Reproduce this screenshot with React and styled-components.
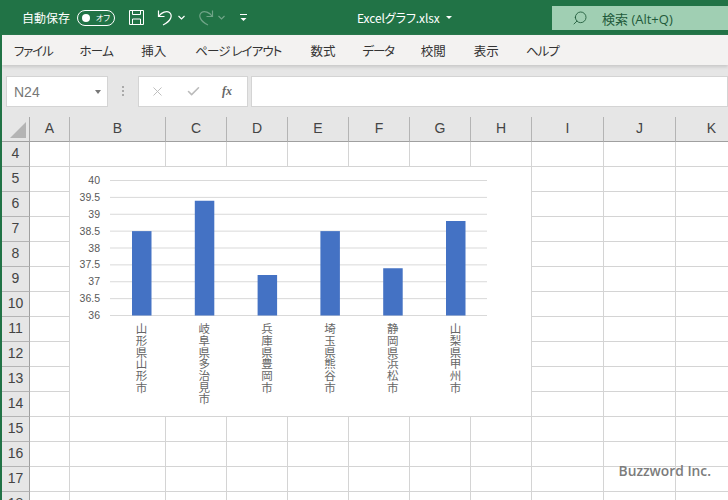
import styled, { createGlobalStyle } from "styled-components";
import { Search, X, Check } from "lucide-react";

const GlobalStyle = createGlobalStyle`
  html, body { margin: 0; padding: 0; background: #fff; }
  body { font-family: "Noto Sans CJK JP", "Liberation Sans", sans-serif; overflow: hidden; }
`;

const Window = styled.div`
  width: 728px;
  height: 500px;
  overflow: hidden;
  position: relative;
  border-left: 2px solid #217346;
  box-sizing: border-box;
`;
const TitleBar = styled.div`
  height: 35px;
  margin-left: -2px;
  background: #217346;
  color: #fff;
  display: flex;
  align-items: center;
  font-size: 12px;
`;
const AutoSave = styled.span`
  margin-left: 22px;
  font-size: 12px;
  white-space: nowrap;
`;
const Toggle = styled.span`
  width: 38px;
  height: 16px;
  margin-left: 7px;
  border: 1px solid #fff;
  border-radius: 8px;
  display: flex;
  align-items: center;
  justify-content: space-between;
  padding: 0 4px;
  box-sizing: border-box;
  font-size: 8px;
  font-feature-settings: "palt";
  &::before {
    content: "";
    width: 8px;
    height: 8px;
    border-radius: 50%;
    background: #fff;
  }
`;
const IconSlot = styled.span`
  display: flex;
  align-items: center;
  margin-left: ${(props) => props.$gap}px;
  opacity: ${(props) => (props.$dim ? 0.35 : 1)};
`;
const FileName = styled.span`
  margin-left: 110px;
  font-size: 12px;
  font-feature-settings: "palt";
  letter-spacing: -0.1px;
  white-space: nowrap;
`;
const FileArrow = styled.span`
  margin-left: 6px;
  border: 3px solid transparent;
  border-top: 3px solid #fff;
  border-bottom: 0;
`;
const SearchBox = styled.div`
  width: 176px;
  height: 24px;
  margin: 1px 0 0 auto;
  background: #a0cfb3;
  color: #1f5a3a;
  display: flex;
  align-items: center;
  font-family: "Open Sans", "Noto Sans CJK JP", sans-serif;
  font-size: 13px;
  padding-left: 20px;
  box-sizing: border-box;
  gap: 14px;
  white-space: nowrap;
`;
const SearchIcon = styled(Search)`
  transform: scaleX(-1);
`;
const Ribbon = styled.div`
  height: 30px;
  background: #f3f2f1;
  display: flex;
  align-items: center;
  font-size: 12.5px;
  font-feature-settings: "palt";
  color: #333;
  box-shadow: 0 2px 3px #c8c8c8;
  position: relative;
`;
const Tab = styled.span`
  margin-left: ${(props) => props.$gap}px;
  letter-spacing: ${(props) => props.$squeeze}px;
  white-space: nowrap;
`;
const FormulaBar = styled.div`
  height: 52px;
  background: #e6e6e6;
  display: flex;
  padding: 11px 0 0 4px;
  box-sizing: border-box;
`;
const NameBox = styled.div`
  width: 102px;
  height: 31px;
  background: #fff;
  border: 1px solid #d4d4d4;
  display: flex;
  align-items: center;
  justify-content: space-between;
  padding: 0 6px 0 7px;
  box-sizing: border-box;
  font-family: "Liberation Sans", sans-serif;
  font-size: 14px;
  color: #777;
  &::after {
    content: "";
    border: 3.5px solid transparent;
    border-top: 4px solid #777;
    border-bottom: 0;
  }
`;
const Dots = styled.span`
  width: 2px;
  height: 2px;
  margin: 14px 14px 0 14px;
  background: #aaa;
  box-shadow: 0 -4px #aaa, 0 4px #aaa;
`;
const FormulaButtons = styled.div`
  width: 110px;
  height: 31px;
  background: #fff;
  border: 1px solid #d4d4d4;
  box-sizing: border-box;
  display: flex;
  align-items: center;
  color: #bbb;
  padding-left: 11px;
  gap: 21px;
`;
const Fx = styled.span`
  font-family: "Liberation Serif", serif;
  font-style: italic;
  font-weight: bold;
  font-size: 12px;
  color: #666;
`;
const FormulaInput = styled.div`
  flex: 1;
  height: 31px;
  margin-left: 3px;
  background: #fff;
  border: 1px solid #d4d4d4;
  box-sizing: border-box;
`;
const Sheet = styled.div`
  position: relative;
  display: grid;
  grid-template-columns: 28px 40px 96px 61px 61px 61px 61px 61px 61px 72px 72px 72px;
  grid-auto-rows: 25px;
  font-family: "Liberation Sans", sans-serif;
  font-size: 14px;
  color: #444;
`;
const Corner = styled.div`
  background: #e6e6e6;
  border-right: 1px solid #a8a8a8;
  border-bottom: 1px solid #a0a0a0;
  box-sizing: border-box;
  position: relative;
  &::after {
    content: "";
    position: absolute;
    right: 3px;
    bottom: 3px;
    border-style: solid;
    border-width: 0 0 16px 16px;
    border-color: transparent transparent #b4b4b4 transparent;
  }
`;
const ColHead = styled.div`
  background: #e6e6e6;
  border-right: 1px solid #b4b4b4;
  border-bottom: 1px solid #a0a0a0;
  box-sizing: border-box;
  padding-bottom: 2px;
  display: flex;
  align-items: center;
  justify-content: center;
`;
const RowHead = styled.div`
  background: #e6e6e6;
  border-right: 1px solid #a0a0a0;
  border-bottom: 1px solid #b4b4b4;
  box-sizing: border-box;
  padding-bottom: 2px;
  display: flex;
  align-items: center;
  justify-content: center;
`;
const Cell = styled.div`
  background: #fff;
  border-right: 1px solid #d4d4d4;
  border-bottom: 1px solid #d4d4d4;
  box-sizing: border-box;
`;
const Chart = styled.div`
  position: absolute;
  left: 68px;
  top: 50px;
  width: 461px;
  height: 249px;
  background: #fff;
`;
const Plot = styled.svg`
  display: block;
  font-family: "Liberation Sans", sans-serif;
  font-size: 10.5px;
`;
const Labels = styled.div`
  position: absolute;
  left: 40px;
  top: 156px;
  width: 377px;
  display: grid;
  grid-template-columns: repeat(6, 1fr);
`;
const Label = styled.span`
  writing-mode: vertical-rl;
  text-orientation: upright;
  justify-self: center;
  font-family: "Noto Sans CJK JP", sans-serif;
  font-size: 11.5px;
  line-height: 12px;
  letter-spacing: 0.2px;
  color: #666;
`;
const Watermark = styled.div`
  position: absolute;
  right: 17px;
  bottom: 20px;
  font-family: "Open Sans", sans-serif;
  font-weight: 600;
  font-size: 13.8px;
  color: #7c7c7c;
`;

const cols = ["A", "B", "C", "D", "E", "F", "G", "H", "I", "J", "K"];
const rows = [4, 5, 6, 7, 8, 9, 10, 11, 12, 13, 14, 15, 16, 17, 18];
const ticks = [40, 39.5, 39, 38.5, 38, 37.5, 37, 36.5, 36];
const data = [
  { name: "山形県山形市", value: 38.5 },
  { name: "岐阜県多治見市", value: 39.4 },
  { name: "兵庫県豊岡市", value: 37.2 },
  { name: "埼玉県熊谷市", value: 38.5 },
  { name: "静岡県浜松市", value: 37.4 },
  { name: "山梨県甲州市", value: 38.8 },
];
const tabs = [
  { name: "ファイル", gap: 12, squeeze: -1.2 },
  { name: "ホーム", gap: 27, squeeze: -0.7 },
  { name: "挿入", gap: 28, squeeze: 0 },
  { name: "ページ レイアウト", gap: 29, squeeze: -0.9 },
  { name: "数式", gap: 29, squeeze: 0 },
  { name: "データ", gap: 27, squeeze: -1.2 },
  { name: "校閲", gap: 27, squeeze: 0 },
  { name: "表示", gap: 28, squeeze: 0 },
  { name: "ヘルプ", gap: 27, squeeze: -1 },
];

const yFor = (v) => 13.5 + (40 - v) * 33.75;

const SaveIcon = () => (
  <svg width="17" height="17" viewBox="0 0 17 17" fill="none" stroke="#fff" strokeWidth="1">
    <path d="M1.5 1.5h14v14h-14z" />
    <path d="M4.5 1.5v4h8v-4M4.5 15.5v-5.500h8v5.500" />
  </svg>
);

const UndoIcon = ({ flip }) => (
  <svg width="17" height="17" viewBox="0 0 17 17" fill="none" stroke="#fff" strokeWidth="1.2">
    <g transform={flip ? "translate(17 0) scale(-1 1)" : undefined}>
      <path d="M1.5 1.500v6h6" />
      <path d="M2 7C4.500 3.500 9.500 1.500 12.500 3.500 16 6.500 14 12 6 16" />
    </g>
  </svg>
);

const SmallArrow = () => (
  <svg width="7" height="5" viewBox="0 0 7 5" fill="none" stroke="#fff" strokeWidth="1.2">
    <path d="M.5 1l3 3 3-3" />
  </svg>
);

const MoreIcon = () => (
  <svg width="7" height="8" viewBox="0 0 7 8" fill="#fff">
    <rect y="0" width="7" height="1" />
    <path d="M.5 4h6l-3 3z" />
  </svg>
);

const App = () => {
  return (
    <Window>
      <GlobalStyle />
      <TitleBar>
        <AutoSave>自動保存</AutoSave>
        <Toggle>オフ</Toggle>
        <IconSlot $gap={13}><SaveIcon /></IconSlot>
        <IconSlot $gap={12}><UndoIcon /></IconSlot>
        <IconSlot $gap={4}><SmallArrow /></IconSlot>
        <IconSlot $gap={12} $dim><UndoIcon flip /></IconSlot>
        <IconSlot $gap={4} $dim><SmallArrow /></IconSlot>
        <IconSlot $gap={15}><MoreIcon /></IconSlot>
        <FileName>Excelグラフ.xlsx</FileName>
        <FileArrow />
        <SearchBox>
          <SearchIcon size={16} strokeWidth={1.3} />
          検索 (Alt+Q)
        </SearchBox>
      </TitleBar>
      <Ribbon>
        {tabs.map((tab) => (
          <Tab key={tab.name} $gap={tab.gap} $squeeze={tab.squeeze}>{tab.name}</Tab>
        ))}
      </Ribbon>
      <FormulaBar>
        <NameBox>N24</NameBox>
        <Dots />
        <FormulaButtons>
          <X size={15} strokeWidth={1.5} />
          <Check size={15} strokeWidth={2.5} />
          <Fx>fx</Fx>
        </FormulaButtons>
        <FormulaInput />
      </FormulaBar>
      <Sheet>
        <Corner />
        {cols.map((c) => <ColHead key={c}>{c}</ColHead>)}
        {rows.map((r) => [
          <RowHead key={r}>{r}</RowHead>,
          ...cols.map((c) => <Cell key={r + c} />),
        ])}
        <Chart>
          <Plot width="461" height="249">
            {ticks.map((t) => (
              <g key={t}>
                <line x1="40" x2="417" y1={yFor(t)} y2={yFor(t)} stroke="#d9d9d9" />
                <text x="30" y={yFor(t) + 3.5} textAnchor="end" fill="#595959">{t}</text>
              </g>
            ))}
            {data.map((d, i) => (
              <rect
                key={d.name}
                x={62 + i * 62.8}
                y={yFor(d.value)}
                width="19.5"
                height={yFor(36) - yFor(d.value)}
                fill="#4472c4"
              />
            ))}
          </Plot>
          <Labels>
            {data.map((d) => <Label key={d.name}>{d.name}</Label>)}
          </Labels>
        </Chart>
      </Sheet>
      <Watermark>Buzzword Inc.</Watermark>
    </Window>
  );
};

export default App;
